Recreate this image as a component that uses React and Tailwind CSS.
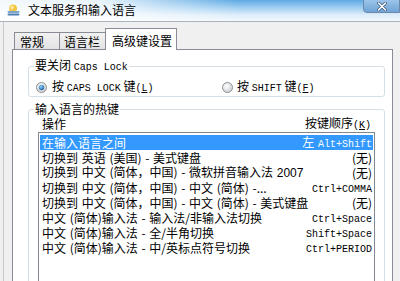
import React from "react";

const CJK = "font-['Noto_Sans_CJK_SC','Noto_Sans',sans-serif]";
const MONO = "font-['Liberation_Mono',monospace]";

function M({ children, className = "" }) {
  return <span className={`${MONO} text-[10px] ${className}`}>{children}</span>;
}

const rows = [
  { l: <>在输入语言之间</>, r: <>左 <M>Alt+Shift</M></>, sel: true },
  { l: <>切换到 英语 (美国) - 美式键盘</>, r: <>(无)</> },
  { l: <>切换到 中文 (简体，中国) - 微软拼音输入法 <span className="font-['Liberation_Sans',sans-serif]">2007</span></>, r: <>(无)</> },
  { l: <>切换到 中文 (简体，中国) - 中文 (简体) -...</>, r: <M>Ctrl+COMMA</M> },
  { l: <>切换到 中文 (简体，中国) - 中文 (简体) - 美式键盘</>, r: <>(无)</> },
  { l: <>中文 (简体)输入法 - 输入法/非输入法切换</>, r: <M>Ctrl+Space</M> },
  { l: <>中文 (简体)输入法 - 全/半角切换</>, r: <M>Shift+Space</M> },
  { l: <>中文 (简体)输入法 - 中/英标点符号切换</>, r: <M>Ctrl+PERIOD</M> },
];

function Radio({ checked, id }) {
  return (
    <svg width="11" height="11" viewBox="0 0 11 11" className="shrink-0">
      <defs>
        <radialGradient id={`bg${id}`} cx="0.4" cy="0.35" r="0.7">
          <stop offset="0" stopColor="#ffffff" />
          <stop offset="1" stopColor="#c9cdd3" />
        </radialGradient>
        <radialGradient id={`dot${id}`} cx="0.4" cy="0.35" r="0.7">
          <stop offset="0" stopColor="#8fd3ff" />
          <stop offset="1" stopColor="#1a5c9c" />
        </radialGradient>
      </defs>
      <circle cx="5.5" cy="5.5" r="5" fill={`url(#bg${id})`} stroke="#8e8f8f" strokeWidth="1" />
      {checked && <circle cx="5.5" cy="5.5" r="2.7" fill={`url(#dot${id})`} />}
    </svg>
  );
}

export default function App() {
  return (
    <div className={`w-[400px] h-[281px] overflow-hidden bg-[#f0f0f0] flex flex-col text-black ${CJK}`}>
      {/* Title bar */}
      <div className="h-[22px] shrink-0 flex items-start bg-[linear-gradient(to_bottom,#5ea9e3_0%,#9ccdf1_35%,#dcedfa_70%,#f3f8fc_100%)] border-b border-[#a9b3bf]">
        <div className="flex items-start h-full flex-1 bg-[linear-gradient(to_right,rgba(255,255,255,0.92)_0%,rgba(255,255,255,0.85)_25%,rgba(255,255,255,0)_60%)]">
          <svg width="14" height="12" viewBox="0 0 14 12" className="ml-[7px] mt-[4px]">
            <circle cx="6" cy="4.5" r="4" fill="#f5c542" />
            <circle cx="5" cy="3.5" r="2" fill="#ffe69a" />
            <rect x="0.5" y="7" width="12" height="2" rx="1" fill="#7aa6cf" />
            <rect x="0.5" y="9.5" width="12" height="2" rx="1" fill="#4d7fb3" />
          </svg>
          <div className="ml-[7px] mt-[2px] text-[12px] leading-[16px]">文本服务和输入语言</div>
          <div className="flex-1" />
          <div className="w-[37px] h-[14px] mt-[-1px] rounded-bl-[4px] border border-[#6d88a8] bg-[linear-gradient(to_bottom,#9cc4ea,#6fa4d6)] flex items-center justify-center">
            <svg width="10" height="9" viewBox="0 0 10 9">
              <path d="M1.5 1 L8.5 8 M8.5 1 L1.5 8" stroke="#3d5876" strokeWidth="3" strokeLinecap="round" />
              <path d="M1.5 1 L8.5 8 M8.5 1 L1.5 8" stroke="#ffffff" strokeWidth="1.6" strokeLinecap="round" />
            </svg>
          </div>
        </div>
      </div>

      {/* Body */}
      <div className="flex-1 flex">
        {/* left frame */}
        <div className="w-[12px] shrink-0 flex">
          <div className="w-[3px]" />
          <div className="w-px bg-[#c6c9ce]" />
        </div>

        <div className="w-[381px] shrink-0 flex flex-col">
          {/* Tabs */}
          <div className="h-[27px] flex items-end pl-[2px] relative z-10">
            <div className="w-[46px] h-[17px] border border-b-0 border-[#898c95] bg-[linear-gradient(to_bottom,#f2f2f2,#e3e3e3)] text-[12px] leading-[15px] pl-[5px] pt-[1px]">常规</div>
            <div className="w-[46px] h-[17px] border border-b-0 border-l-0 border-[#898c95] bg-[linear-gradient(to_bottom,#f2f2f2,#e3e3e3)] text-[12px] leading-[15px] pl-[4px] pt-[1px]">语言栏</div>
            <div className="w-[72px] h-[22px] -mb-px -ml-px border border-b-0 border-[#898c95] bg-white text-[12px] leading-[15px] pl-[6px] pt-[4px]">高级键设置</div>
          </div>

          {/* Panel */}
          <div className="flex-1 border border-[#898c95] bg-white pl-[15px] pr-[7px]">
            <fieldset className="mt-[8px] border border-[#d5dfe5] rounded-[3px] pb-[2px]">
              <legend className="ml-[5px] px-[1px] text-[12px] leading-[14px] whitespace-nowrap">
                要关闭 <M className="text-[10.5px]">Caps Lock</M>
              </legend>
              <div className="mt-[5px] h-[14px] flex items-center text-[12px] leading-[14px] whitespace-nowrap pl-[7px]">
                <div className="w-[186px] shrink-0 flex items-center">
                  <Radio checked id="a" />
                  <span className="ml-[5px]">按 <M className="text-[10.5px]">CAPS LOCK</M> 键<M>(<u>L</u>)</M></span>
                </div>
                <Radio id="b" />
                <span className="ml-[4px]">按 <M className="text-[10.5px]">SHIFT</M> 键<M>(<u>F</u>)</M></span>
              </div>
            </fieldset>

            <fieldset className="mt-[5px] border border-[#d5dfe5] rounded-[3px] h-[200px]">
              <legend className="ml-[5px] px-[1px] text-[12px] leading-[14px]">输入语言的热键</legend>
              <div className="mt-[1px] h-[14px] flex items-center justify-between pl-[13px] pr-[13px] text-[12px] leading-[14px]">
                <span>操作</span>
                <span>按键顺序<M>(<u>K</u>)</M></span>
              </div>
              <div className="mt-[1px] ml-[9px] w-[337px] h-[200px] border border-[#828790] bg-white pt-[2px] px-px">
                {rows.map((r, i) => (
                  <div
                    key={i}
                    className={`h-[15px] flex items-center justify-between pl-[2px] pr-[1px] text-[12px] leading-[15px] whitespace-nowrap [word-spacing:1px] ${r.sel ? "bg-[#3399ff] text-white" : ""}`}
                  >
                    <span>{r.l}</span>
                    <span>{r.r}</span>
                  </div>
                ))}
              </div>
            </fieldset>
          </div>
        </div>

        <div className="flex-1" />
      </div>
    </div>
  );
}
